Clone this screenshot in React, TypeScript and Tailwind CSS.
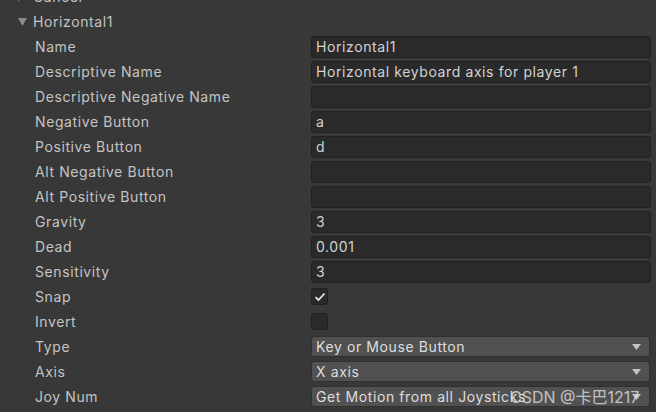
import { ReactNode } from "react";

type Row =
  | { label: string; kind: "text"; value?: string }
  | { label: string; kind: "check"; checked: boolean }
  | { label: string; kind: "select"; value: string };

const rows: Row[] = [
  { label: "Name", kind: "text", value: "Horizontal1" },
  { label: "Descriptive Name", kind: "text", value: "Horizontal keyboard axis for player 1" },
  { label: "Descriptive Negative Name", kind: "text" },
  { label: "Negative Button", kind: "text", value: "a" },
  { label: "Positive Button", kind: "text", value: "d" },
  { label: "Alt Negative Button", kind: "text" },
  { label: "Alt Positive Button", kind: "text" },
  { label: "Gravity", kind: "text", value: "3" },
  { label: "Dead", kind: "text", value: "0.001" },
  { label: "Sensitivity", kind: "text", value: "3" },
  { label: "Snap", kind: "check", checked: true },
  { label: "Invert", kind: "check", checked: false },
  { label: "Type", kind: "select", value: "Key or Mouse Button" },
  { label: "Axis", kind: "select", value: "X axis" },
  { label: "Joy Num", kind: "select", value: "Get Motion from all Joysticks" },
];

function Field({ row }: { row: Row }): ReactNode {
  if (row.kind === "check") {
    return (
      <div className="flex h-[17px] w-[17px] items-center justify-center rounded-[3px] border border-[#212121] bg-[#2a2a2a]">
        {row.checked && (
          <svg width="12" height="10" viewBox="0 0 12 10">
            <path d="M1.5 5.2 L4.5 8 L10.5 1.5" fill="none" stroke="#e6e6e6" strokeWidth="1.8" />
          </svg>
        )}
      </div>
    );
  }
  if (row.kind === "select") {
    return (
      <div className="flex h-[21px] w-[339px] items-center justify-between rounded-[3px] border border-[#303030] bg-[#515151] pl-[4px] pr-[8px] text-[#dedede]">
        <span className="whitespace-nowrap">{row.value}</span>
        <svg width="9" height="6" viewBox="0 0 9 6" className="shrink-0">
          <path d="M0 0 H9 L4.5 6 Z" fill="#c4c4c4" />
        </svg>
      </div>
    );
  }
  return (
    <div className="flex h-[22px] w-[340px] items-center rounded-[3px] border border-[#212121] bg-[#2a2a2a] px-[4px] text-[#d2d2d2]">
      <span className="whitespace-nowrap">{row.value ?? ""}</span>
    </div>
  );
}

export default function App() {
  return (
    <div
      className="relative h-[412px] w-[656px] overflow-hidden bg-[#383838] text-[14px] tracking-[0.6px] text-[#c4c4c4]"
      style={{ fontFamily: "Inter, 'Noto Sans', sans-serif" }}
    >
      <div className="-mt-[16px] flex flex-col">
        <div className="flex h-[25px] items-center pl-[18px]">
          <svg width="8" height="9" viewBox="0 0 8 9" className="mr-[7px]">
            <path d="M0 0 L8 4.5 L0 9 Z" fill="#8a8a8a" />
          </svg>
          <span>Cancel</span>
        </div>
        <div className="flex h-[25px] items-center pl-[18px]">
          <svg width="9" height="8" viewBox="0 0 9 8" className="mr-[6px]">
            <path d="M0 0 H9 L4.5 8 Z" fill="#8a8a8a" />
          </svg>
          <span>Horizontal1</span>
        </div>
        {rows.map((row) => (
          <div key={row.label} className="flex h-[25px] items-center">
            <div className="w-[311px] shrink-0 pl-[35px]">{row.label}</div>
            <Field row={row} />
          </div>
        ))}
      </div>
      <div
        className="pointer-events-none absolute left-[510px] top-[385px] text-[16px] tracking-normal text-[#e0e0e0]/80"
        style={{ fontFamily: "Inter, 'Noto Sans CJK SC', sans-serif" }}
      >
        CSDN @卡巴1217
      </div>
    </div>
  );
}
